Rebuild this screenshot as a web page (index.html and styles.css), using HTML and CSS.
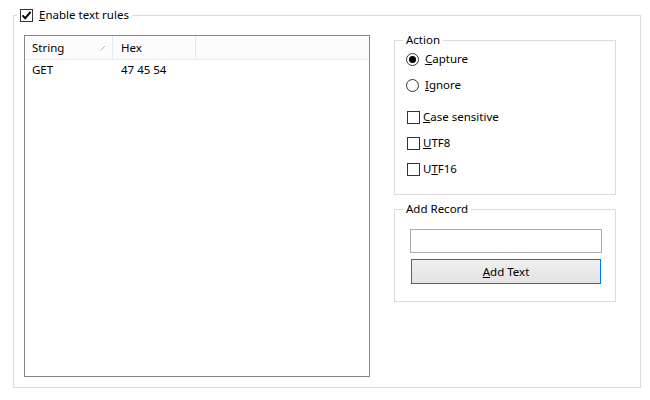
FILE: index.html
```html
<!DOCTYPE html>
<html lang="en">
<head>
    <meta charset="UTF-8">
    <title>Text rules</title>
    <link rel="stylesheet" href="styles.css">
</head>
<body>

    <fieldset class="group outer">
        <legend>
            <span class="opt">
                <span class="check">
                    <svg width="11" height="11" viewBox="0 0 11 11"><path d="M1.5 5.3 L4.2 8.2 L9.6 1.8" fill="none" stroke="#000" stroke-width="1.9"/></svg>
                </span>
                <span><u>E</u>nable text rules</span>
            </span>
        </legend>

        <div class="panel">
            <div class="list">
                <div class="list-head">
                    <div class="col-string">String
                        <svg class="sort" width="6" height="6" viewBox="0 0 6 6"><path d="M0.5 5.5 L5 1" stroke="#b4b4b4" stroke-width="1"/></svg>
                    </div>
                    <div class="col-hex">Hex</div>
                </div>
                <div class="list-row">
                    <div class="col-string">GET</div>
                    <div class="col-hex">47 45 54</div>
                </div>
            </div>

            <div class="side">
                <fieldset class="group action">
                    <legend>Action</legend>
                    <div class="options">
                        <div class="opt"><span class="radio on"></span><span><u>C</u>apture</span></div>
                        <div class="opt"><span class="radio"></span><span><u>I</u>gnore</span></div>
                        <div class="opt spaced"><span class="check"></span><span><u>C</u>ase sensitive</span></div>
                        <div class="opt"><span class="check"></span><span><u>U</u>TF8</span></div>
                        <div class="opt"><span class="check"></span><span>U<u>T</u>F16</span></div>
                    </div>
                </fieldset>

                <fieldset class="group record">
                    <legend>Add Record</legend>
                    <input class="text-field" type="text">
                    <button class="btn"><u>A</u>dd Text</button>
                </fieldset>
            </div>
        </div>
    </fieldset>

</body>
</html>
```

FILE: styles.css
```css
* {
    box-sizing: border-box;
}
body {
    margin: 0;
    width: 650px;
    height: 400px;
    background-color: #fff;
    font-family: "Segoe UI", "Noto Sans", sans-serif;
    font-size: 11.5px;
    color: #000;
}
.group {
    border: 1px solid #dcdcdc;
    margin: 0;
    padding: 0;
    min-width: 0;
}
.group legend {
    padding: 0 3px;
    height: 16px;
    line-height: 16px;
}
.outer {
    margin: 7px 0 0 13px;
    width: 628px;
    height: 381px;
    padding: 12px 10px 0 10px;
}
.outer legend {
    margin-left: -7px;
}
.panel {
    display: flex;
    gap: 24px;
}
.list {
    width: 346px;
    height: 342px;
    border: 1px solid #828790;
    background-color: #fff;
}
.list-head {
    display: flex;
    height: 24px;
    line-height: 23px;
    background-color: #fcfcfd;
    border-bottom: 1px solid #e5e9f0;
}
.list-head .col-string,
.list-head .col-hex {
    border-right: 1px solid #e5e9f0;
}
.list-row {
    display: flex;
    height: 20px;
    line-height: 20px;
}
.col-string {
    position: relative;
    width: 88px;
    padding-left: 7px;
}
.col-hex {
    width: 83px;
    padding-left: 8px;
}
.sort {
    position: absolute;
    left: 75px;
    top: 9px;
}
.side {
    width: 222px;
    margin-top: -3px;
    display: flex;
    flex-direction: column;
    gap: 6px;
}
.action {
    height: 163px;
    padding: 3px 0 0 11px;
}
.action legend {
    margin-left: -3px;
}
.record {
    height: 101px;
    padding: 12px 0 0 15px;
}
.record legend {
    margin-left: -7px;
}
.options {
    display: flex;
    flex-direction: column;
    gap: 10px;
}
.opt {
    display: flex;
    align-items: center;
    height: 16px;
    line-height: 16px;
}
.spaced {
    margin-top: 6px;
}
.radio {
    width: 13px;
    height: 13px;
    border: 1px solid #333;
    border-radius: 50%;
    margin-right: 6px;
    background-color: #fff;
    display: flex;
    align-items: center;
    justify-content: center;
}
.radio.on::after {
    content: "";
    width: 7px;
    height: 7px;
    border-radius: 50%;
    background-color: #000;
}
.check {
    width: 13px;
    height: 13px;
    border: 1px solid #333;
    background-color: #fff;
    display: flex;
    align-items: center;
    justify-content: center;
}
.outer legend .check {
    margin-right: 6px;
}
.options .check {
    margin-left: 1px;
    margin-right: 3px;
}
.text-field {
    display: block;
    width: 192px;
    height: 24px;
    margin: 0 0 6px 0;
    border: 1px solid #ababab;
    background-color: #fff;
    outline: none;
}
.btn {
    display: block;
    width: 190px;
    height: 25px;
    margin-left: 1px;
    padding: 0;
    border: 1px solid #0078d7;
    background: linear-gradient(#efefef, #e3e3e3);
    font-family: inherit;
    font-size: 11.5px;
    color: #000;
}
```
